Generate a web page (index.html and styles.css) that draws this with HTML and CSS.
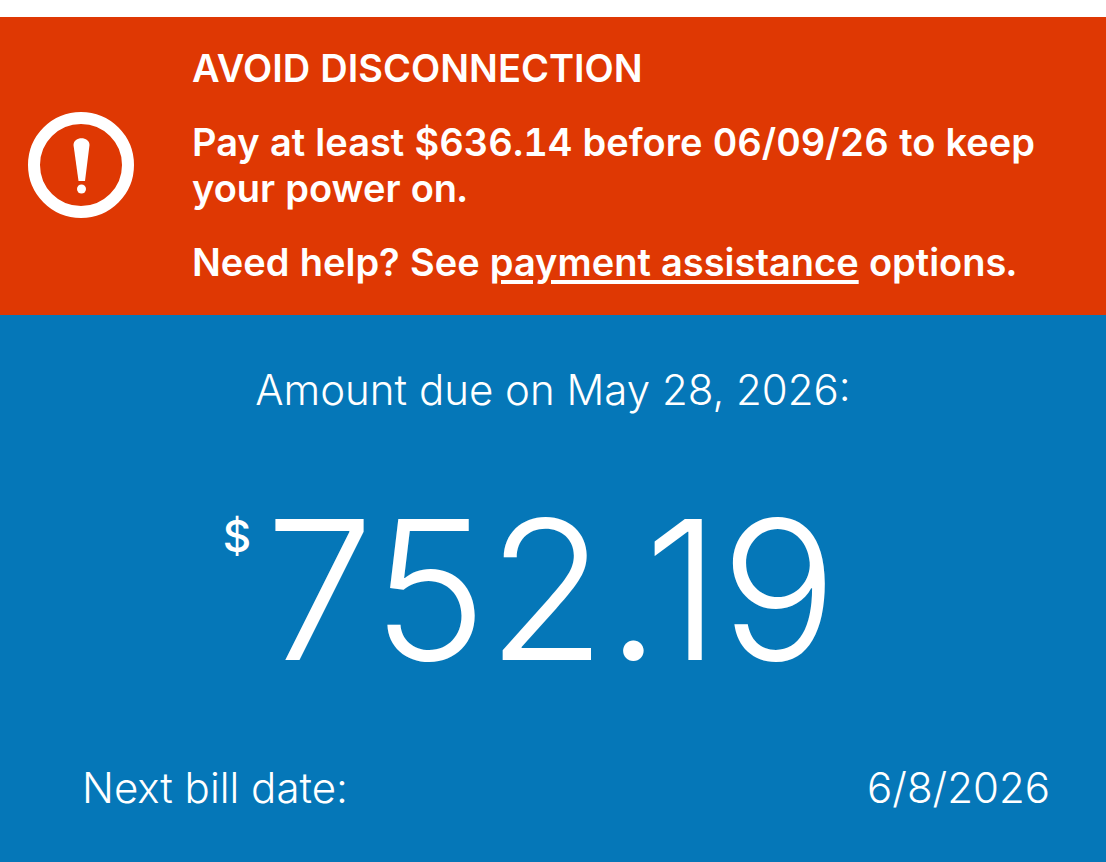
FILE: index.html
```html
<!DOCTYPE html>
<html lang="en">
<head>
    <meta charset="UTF-8">
    <meta name="viewport" content="width=device-width, initial-scale=1.0">
    <title>Amount Due</title>
    <link rel="stylesheet" href="styles.css">
</head>
<body>
    <section class="alert">
        <svg class="alert-icon" viewBox="0 0 106 106" aria-hidden="true">
            <circle cx="53" cy="53" r="47" fill="none" stroke="#fff" stroke-width="12"/>
            <path d="M45.5 33 C45.5 24 61.5 24 61.5 33 L57 69 H50.5 Z" fill="#fff"/>
            <circle cx="53.5" cy="77" r="4.5" fill="#fff"/>
        </svg>
        <div class="alert-text">
            <p>AVOID DISCONNECTION</p>
            <p>Pay at least $636.14 before 06/09/26 to keep your power on.</p>
            <p>Need help? See <a href="#">payment assistance</a> options.</p>
        </div>
    </section>

    <main class="bill">
        <h1 class="due-label">Amount due on May 28, 2026:</h1>
        <div class="amount"><span class="currency">$</span><span class="value">752.19</span></div>
        <div class="next-bill">
            <span>Next bill date:</span>
            <span>6/8/2026</span>
        </div>
    </main>
</body>
</html>
```
FILE: styles.css
```css
* { box-sizing: border-box; }
body { margin: 0; padding-top: 17px; min-height: 100vh; display: flex; flex-direction: column; font-family: Inter, sans-serif; color: #fff; background-color: #fff; }
p, h1 { margin: 0; }

.alert { display: flex; align-items: center; gap: 58px; padding: 28px 28px 30px; background-color: #df3803; }
.alert-icon { width: 106px; height: 106px; flex: none; }
.alert-text { display: flex; flex-direction: column; gap: 28px; font-size: 38px; line-height: 46px; font-weight: 600; font-variant-numeric: tabular-nums; }
.alert-text a { color: inherit; text-decoration: underline; text-decoration-thickness: 4px; text-underline-offset: 4px; }

.bill { flex: 1; padding: 47px 56px 40px; background-color: #0577b8; font-weight: 300; }
.due-label { font-size: 42px; line-height: 56px; font-weight: 300; text-align: center; }
.amount { display: flex; justify-content: center; align-items: flex-start; gap: 14px; margin: 64px 0 62px; padding-right: 46px; }
.currency { font-size: 44px; line-height: 108px; font-weight: 500; }
.value { font-size: 194px; line-height: 216px; }
.next-bill { display: flex; justify-content: space-between; padding-left: 26px; font-size: 42px; line-height: 56px; }
```
